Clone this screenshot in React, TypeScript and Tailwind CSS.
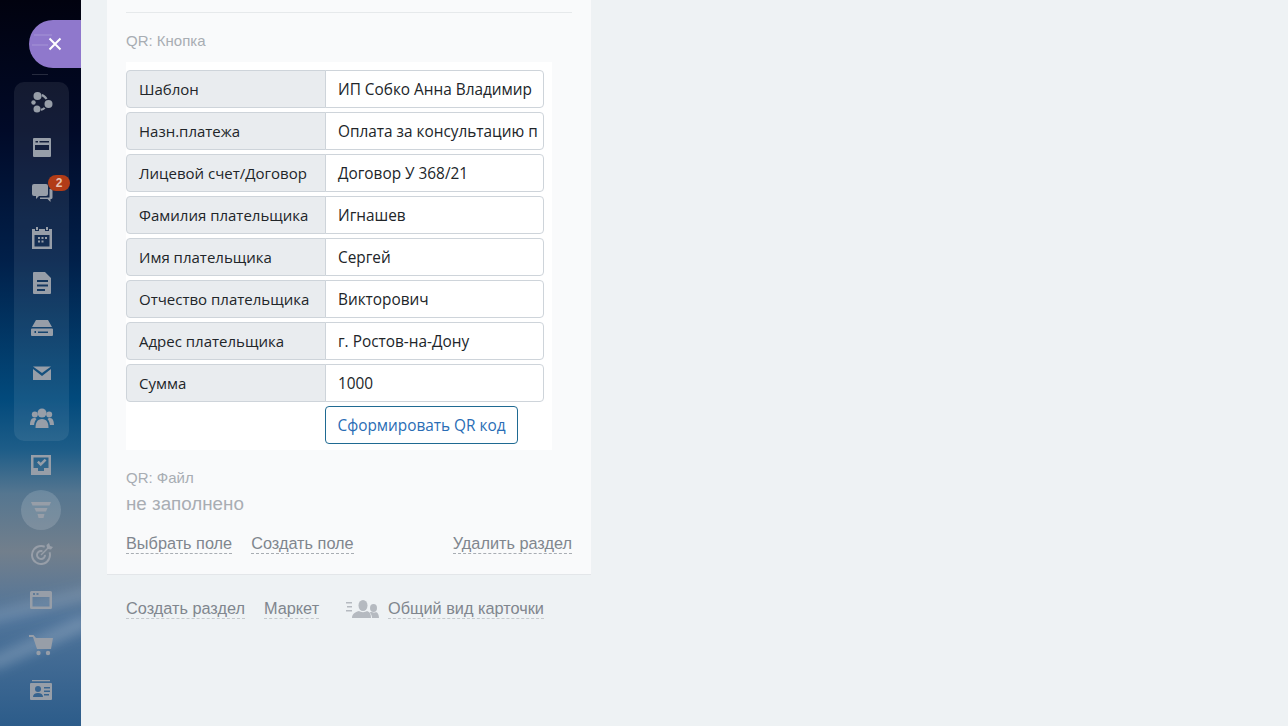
import React from "react"

const rows = [
    { label: "Шаблон", value: "ИП Собко Анна Владимир" },
    { label: "Назн.платежа", value: "Оплата за консультацию п" },
    { label: "Лицевой счет/Договор", value: "Договор У 368/21" },
    { label: "Фамилия плательщика", value: "Игнашев" },
    { label: "Имя плательщика", value: "Сергей" },
    { label: "Отчество плательщика", value: "Викторович" },
    { label: "Адрес плательщика", value: "г. Ростов-на-Дону" },
    { label: "Сумма", value: "1000" },
]

const IconSvg = ({ children }: { children: React.ReactNode }) => (
    <svg width="24" height="24" viewBox="0 0 24 24" fill="currentColor">
        {children}
    </svg>
)

const panelIcons = [
    <IconSvg key="a">
        <circle cx="7.500" cy="6" r="4" />
        <circle cx="18.500" cy="14" r="4" />
        <circle cx="7" cy="19" r="3.500" />
        <circle cx="3.500" cy="12.500" r="2.200" />
        <path d="M12 4c2 .5 4 2 5.500 4.500l-2 1C14.500 8 13 6.800 11.500 6.300zM15.500 18.500c-1.200 1.200-2.800 2-4.500 2.300l-.3-2c1.300-.3 2.300-.8 3.200-1.600z" />
    </IconSvg>,
    <IconSvg key="b">
        <path fillRule="evenodd" d="M4 3h16a1 1 0 0 1 1 1v17a1 1 0 0 1-1 1H4a1 1 0 0 1-1-1V4a1 1 0 0 1 1-1zm1.500 3v1.500H8V6zm4 0v1.500H19V6zM5 10v5h14v-5z" />
    </IconSvg>,
    <IconSvg key="c">
        <path d="M4 4h12a2 2 0 0 1 2 2v8a2 2 0 0 1-2 2H9l-3 3v-3H4a2 2 0 0 1-2-2V6a2 2 0 0 1 2-2z" />
        <path d="M19.500 9H21a1.500 1.500 0 0 1 1.500 1.500v7A1.500 1.500 0 0 1 21 19h-.5v3l-3-3H10v-1.500h9.500z" />
    </IconSvg>,
    <IconSvg key="d">
        <path fillRule="evenodd" d="M6 1h2v3H6zM16 1h2v3h-2zM2 3h3v2h4V3h6v2h4V3h3v20H2zm2.500 6v11.500h15V9zM8 11h2v2H8zm3.500 0h2v2h-2zm3.500 0h2v2h-2zM8 14.500h2v2H8zm3.500 0h2v2h-2z" />
    </IconSvg>,
    <IconSvg key="e">
        <path fillRule="evenodd" d="M4 1h11l6 6v15a1 1 0 0 1-1 1H4a1 1 0 0 1-1-1V2a1 1 0 0 1 1-1zm3 8v2h11V9zm0 4.500v2h11v-2zM7 18v2h8v-2z" />
    </IconSvg>,
    <IconSvg key="f">
        <path fillRule="evenodd" d="M6 4h12l4 7H2zM2 12.500h20a1 1 0 0 1 1 1V19a1 1 0 0 1-1 1H2a1 1 0 0 1-1-1v-5.500a1 1 0 0 1 1-1zm2.500 2.500v2H6v-2zm3.500.500v1.500h10v-1.500z" />
    </IconSvg>,
    <IconSvg key="g">
        <path d="M3 5.500h18L12 12z" />
        <path d="M3 8l9 7 9-7v11H3z" />
    </IconSvg>,
    <IconSvg key="h">
        <circle cx="12" cy="6" r="4.500" />
        <path d="M5.500 21c0-5 1.500-9 6.500-9s6.500 4 6.500 9z" />
        <circle cx="4.800" cy="7.500" r="3" />
        <circle cx="19.200" cy="7.500" r="3" />
        <path d="M0 18c0-3.500 1-7 4-7 1.500 0 2 .5 2.500 1-1.500 1.500-2.200 3.500-2.400 6zM24 18c0-3.500-1-7-4-7-1.500 0-2 .5-2.500 1 1.500 1.500 2.200 3.500 2.400 6z" />
    </IconSvg>,
]

const lowerIcons = [
    <IconSvg key="i">
        <path fillRule="evenodd" d="M2 2h20v20H2zm2.500 2.500V15H9v3h6v-3h4.500V4.500z" />
        <path d="M8 9.500l1.700-1.700 2 2 4-4L17.500 7.500l-5.800 5.800z" />
    </IconSvg>,
    <IconSvg key="j">
        <path d="M2 4h20l-1.500 3.500h-17zM5.500 10h13L17 13.500H7zM8.500 16h7L14.500 20h-5z" />
    </IconSvg>,
    <IconSvg key="k">
        <path fillRule="evenodd" d="M12 2a10 10 0 0 1 4 .8l-.6 2A8 8 0 1 0 20 12c0-.9-.1-1.600-.4-2.400l1.900-.7A10 10 0 1 1 12 2zm0 5c.6 0 1.100.1 1.600.2l-.3 2.100A3 3 0 1 0 15 12l2-.2A5 5 0 1 1 12 7z" />
        <path d="M11.500 11.500L18 5l-.5-3L20 0l1 3 3 1-2 2.500-3-.5-6.500 6.500z" />
    </IconSvg>,
    <IconSvg key="l">
        <path fillRule="evenodd" d="M2.500 3h19A1.500 1.500 0 0 1 23 4.500v15a1.500 1.500 0 0 1-1.500 1.500h-19A1.500 1.500 0 0 1 1 19.500v-15A1.500 1.500 0 0 1 2.500 3zM3.500 9v9.500h17V9zM4 5v2h2V5zm3.500 0v2h2V5z" />
    </IconSvg>,
    <IconSvg key="m">
        <path d="M0 2h4.500l2.500 3h17l-2 11H8L4 4H0z" />
        <circle cx="9.500" cy="20" r="2.200" />
        <circle cx="19" cy="20" r="2.200" />
    </IconSvg>,
    <IconSvg key="n">
        <path fillRule="evenodd" d="M3 2h18v1.200H3zM2 5h20a1 1 0 0 1 1 1v15a1 1 0 0 1-1 1H2a1 1 0 0 1-1-1V6a1 1 0 0 1 1-1zm7 3a3 3 0 1 0 0 6 3 3 0 0 0 0-6zm-5 11h10c0-2.500-2-4-5-4s-5 1.500-5 4zm11-10v1.500h6V9zm0 3.500V14h6v-1.500zM15 16v1.500h5V16z" />
    </IconSvg>,
]

const Sidebar = () => (
    <div className="relative w-[81px] h-full shrink-0 overflow-hidden bg-[linear-gradient(180deg,#01020f_0%,#010a28_18%,#01204a_36%,#024a7c_55%,#1e5d88_62%,#557690_68%,#727f8c_76%,#50749a_85%,#2c5c8a_100%)]">
        <div className="absolute left-[-20px] top-[598px] w-[130px] h-[12px] rotate-[-14deg] bg-white/15 blur-[6px] rounded-full" />
        <div className="absolute left-[-16px] top-[636px] w-[110px] h-[14px] rotate-[-24deg] bg-white/20 blur-[6px] rounded-full" />
        <div className="absolute left-[29px] top-[20px] w-[60px] h-[48px] rounded-l-[24px] bg-[#8f78cc] flex items-center pl-[17px] text-white">
            <span className="absolute left-[5px] top-[14px] w-[18px] h-[2px] bg-white/10" />
            <span className="absolute left-[3px] top-[24px] w-[16px] h-[2px] bg-white/10" />
            <svg className="relative" width="18" height="18" viewBox="0 0 18 18" stroke="currentColor" strokeWidth="2">
                <path d="M3.500 3.500l11 11M14.500 3.500l-11 11" />
            </svg>
        </div>
        <div className="absolute left-[32px] top-[74px] w-[16px] h-px bg-white/15" />
        <div className="relative pt-[82px] flex flex-col text-[#979ea8]">
            <div className="w-[55px] h-[359px] ml-[14px] rounded-[10px] bg-white/[0.08]">
                <div className="-mt-[3px] flex flex-col items-center">
                    {panelIcons.map((icon, i) => (
                        <div key={i} className="relative h-[45.3px] w-full flex items-center justify-center">
                            {icon}
                            {i === 2 && (
                                <span className="absolute left-[34px] top-[5px] h-[16px] w-[22px] rounded-full bg-[#b23c17] text-[#e8c4b4] text-[12px] font-bold leading-[16px] text-center font-['Liberation_Sans',sans-serif]">
                                    2
                                </span>
                            )}
                        </div>
                    ))}
                </div>
            </div>
            <div className="flex flex-col items-center pt-[1px] w-full">
                {lowerIcons.map((icon, i) => (
                    <div key={i} className="relative h-[45px] w-[40px] flex items-center justify-center">
                        {i === 1 && <span className="absolute left-0 top-[2.500px] w-[40px] h-[40px] rounded-full bg-white/[0.15]" />}
                        <span className="relative flex">{icon}</span>
                    </div>
                ))}
            </div>
        </div>
    </div>
)

const DashedLink = ({ children, className = "" }: { children: React.ReactNode; className?: string }) => (
    <span className={`text-[16.3px] leading-[19px] text-[#80868e] border-b border-dashed border-[#a8adb3] whitespace-nowrap ${className}`}>
        {children}
    </span>
)

const App = () => {
    return (
        <div className="h-[726px] w-[1288px] flex overflow-hidden bg-[#eef2f4] font-['Liberation_Sans',Arial,sans-serif]">
            <Sidebar />
            <div className="pl-[26px] flex flex-col">
                <div className="w-[484px] h-[575px] bg-[#f9fafb] border-b border-[#e3e6e9] pl-[19px] pr-[19px] pt-[12px]">
                    <div className="border-t border-[#e6e9eb]" />
                    <div className="mt-[20px] text-[15px] leading-[16px] text-[#a8adb3]">QR: Кнопка</div>
                    <div className="mt-[13px] w-[426px] h-[388px] bg-white pt-[8px] flex flex-col gap-[4px] font-['Open_Sans',sans-serif]">
                        {rows.map((row) => (
                            <div key={row.label} className="flex h-[38px]">
                                <div className="w-[200px] shrink-0 bg-[#e9ecef] border border-[#ced4da] rounded-l-[4px] pl-[12px] flex items-center text-[15px] text-[#212529] whitespace-nowrap">
                                    {row.label}
                                </div>
                                <div className="w-[219px] -ml-px pt-px bg-white border border-[#ced4da] rounded-r-[4px] px-[12px] flex items-center text-[15.36px] text-[#212529]">
                                    <span className="whitespace-nowrap">{row.value}</span>
                                </div>
                            </div>
                        ))}
                        <div className="pl-[199px]">
                            <div className="w-[193px] h-[38px] pt-px border border-[#1f6a92] rounded-[4px] flex items-center justify-center text-[15.36px] text-[#2a6db5] whitespace-nowrap">
                                Сформировать QR код
                            </div>
                        </div>
                    </div>
                    <div className="mt-[20px] text-[15px] leading-[16px] text-[#a8adb3]">QR: Файл</div>
                    <div className="mt-[7px] text-[18.8px] leading-[21px] text-[#a8adb3]">не заполнено</div>
                    <div className="mt-[20px] flex">
                        <DashedLink>Выбрать поле</DashedLink>
                        <DashedLink className="ml-[19px]">Создать поле</DashedLink>
                        <DashedLink className="ml-auto">Удалить раздел</DashedLink>
                    </div>
                </div>
                <div className="mt-[24px] pl-[19px] flex items-start">
                    <DashedLink className="border-[#c4c8cc]">Создать раздел</DashedLink>
                    <DashedLink className="ml-[19px] border-[#c4c8cc]">Маркет</DashedLink>
                    <svg className="ml-[27px] text-[#b5bac0]" width="33" height="20" viewBox="0 0 33 20" fill="currentColor">
                        <path d="M0 3h6v1.500H0zM1 7h5v1.500H1zM0 11h6v1.500H0z" />
                        <ellipse cx="17" cy="6.500" rx="4.500" ry="5.500" />
                        <path d="M6 19c0-3.500 2-5.500 7-7 2 1.500 6 1.500 8 0 3 1 4 3.500 4 7z" />
                        <ellipse cx="27.500" cy="9" rx="3.500" ry="4" />
                        <path d="M26 19c0-2.500-1-4.500-2.500-5.500 1-.5 2-.5 2.500-.5 1.500.8 3 .8 4 0 2 .8 3 3 3 6z" />
                    </svg>
                    <DashedLink className="ml-[9px] border-[#c4c8cc]">Общий вид карточки</DashedLink>
                </div>
            </div>
        </div>
    )
}

export default App
